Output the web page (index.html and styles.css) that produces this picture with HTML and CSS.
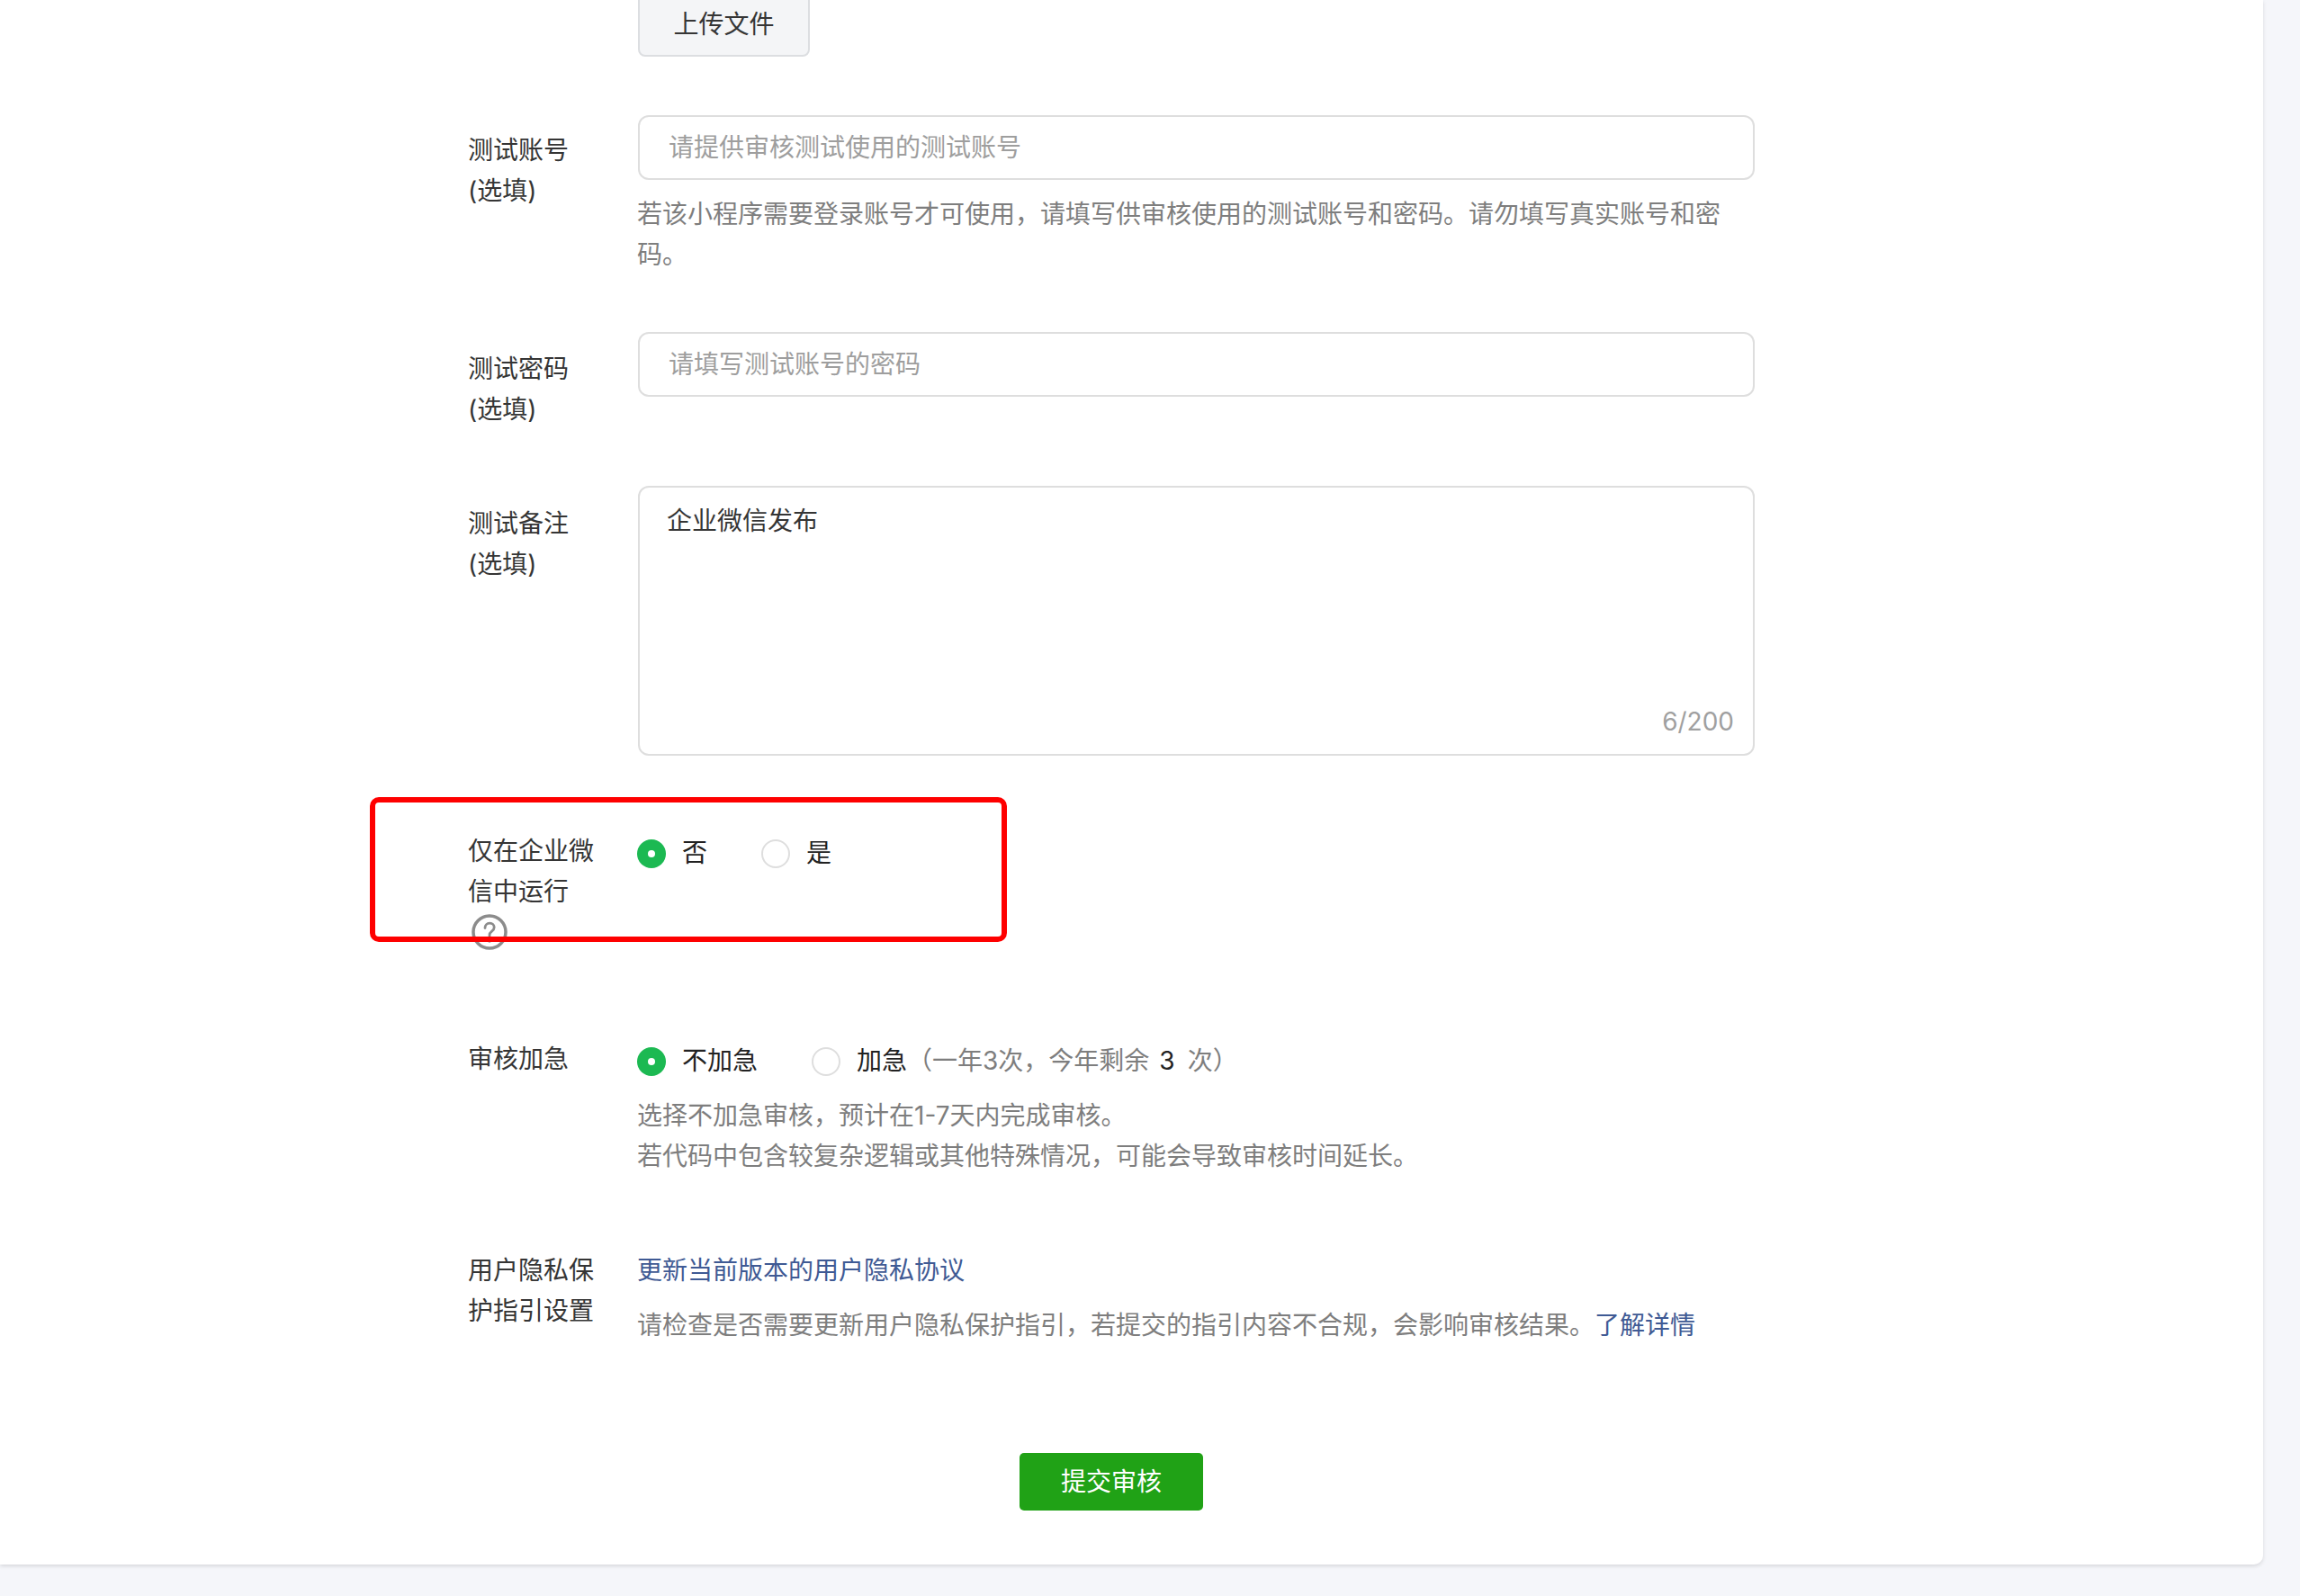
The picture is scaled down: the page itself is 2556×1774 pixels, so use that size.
FILE: index.html
```html
<!DOCTYPE html>
<html lang="zh-CN">
<head>
<meta charset="utf-8">
<title>提交审核</title>
<link rel="stylesheet" href="styles.css">
</head>
<body>
<main class="card">
  <section class="row row-upload">
    <div class="label"></div>
    <div class="field"><button class="upload" type="button">上传文件</button></div>
  </section>

  <section class="row row-account">
    <div class="label">测试账号<br>(选填)</div>
    <div class="field">
      <div class="text-input placeholder">请提供审核测试使用的测试账号</div>
      <p class="help">若该小程序需要登录账号才可使用，请填写供审核使用的测试账号和密码。请勿填写真实账号和密码。</p>
    </div>
  </section>

  <section class="row row-password">
    <div class="label">测试密码<br>(选填)</div>
    <div class="field"><div class="text-input placeholder">请填写测试账号的密码</div></div>
  </section>

  <section class="row row-notes">
    <div class="label">测试备注<br>(选填)</div>
    <div class="field">
      <div class="textarea">企业微信发布<span class="counter">6/200</span></div>
    </div>
  </section>

  <section class="row row-wecom">
    <div class="label">仅在企业微信中运行
      <svg class="question" viewBox="0 0 40 40" aria-hidden="true">
        <circle cx="20" cy="20" r="18" fill="none" stroke="#8c8c8c" stroke-width="3.500"/>
        <path d="M15 15.500c0-3.200 2.200-5.300 5.200-5.300 3 0 5 1.900 5 4.600 0 2.100-1.100 3.200-2.600 4.400-1.500 1.200-2.600 2.100-2.600 4v1.300" fill="none" stroke="#8c8c8c" stroke-width="2.800" stroke-linecap="round"/>
        <circle cx="20" cy="29.800" r="2" fill="#8c8c8c"/>
      </svg>
    </div>
    <div class="field">
      <div class="radios">
        <span class="radio radio-on"></span><span class="radio-text">否</span>
        <span class="radio"></span><span class="radio-text">是</span>
      </div>
    </div>
    <div class="highlight"></div>
  </section>

  <section class="row row-urgent">
    <div class="label">审核加急</div>
    <div class="field">
      <div class="radios">
        <span class="radio radio-on"></span><span class="radio-text">不加急</span>
        <span class="radio"></span><span class="radio-text">加急<span class="muted">（一年3次，今年剩余</span><span class="count">3</span><span class="muted">次）</span></span>
      </div>
      <p class="help">选择不加急审核，预计在1-7天内完成审核。<br>若代码中包含较复杂逻辑或其他特殊情况，可能会导致审核时间延长。</p>
    </div>
  </section>

  <section class="row row-privacy">
    <div class="label">用户隐私保护指引设置</div>
    <div class="field">
      <a class="link link-main" href="#">更新当前版本的用户隐私协议</a>
      <p class="help">请检查是否需要更新用户隐私保护指引，若提交的指引内容不合规，会影响审核结果。<a class="link" href="#">了解详情</a></p>
    </div>
  </section>

  <div class="actions"><button class="submit" type="button">提交审核</button></div>
</main>
</body>
</html>
```
FILE: styles.css
```css
* { box-sizing: border-box; }

html, body {
  margin: 0;
  height: 1774px;
  overflow: hidden;
}

body {
  background: #f5f6fa;
  color: #353535;
  font-family: Inter, "Noto Sans CJK SC", "Liberation Sans", sans-serif;
  font-size: 28px;
  line-height: 45px;
}

.card {
  width: 2515px;
  height: 1739px;
  background: #fff;
  border-bottom-right-radius: 10px;
  box-shadow: 0 2px 4px rgba(0, 0, 0, 0.12);
  overflow: hidden;
}

.row {
  position: relative;
  display: grid;
  grid-template-columns: 189px 1241px;
  padding-left: 520px;
}

.label {
  width: 150px;
  padding-top: 19px;
}

.field { min-width: 0; }

.row-upload {
  grid-template-rows: 63px;
  height: 63px;
  align-items: end;
}
.row-upload .label { padding: 0; }

.row-account { margin-top: 65px; }
.row-password { margin-top: 63px; }
.row-notes { margin-top: 62px; }
.row-wecom { margin-top: 66px; }
.row-urgent { margin-top: 81px; }
.row-privacy { margin-top: 82px; }

.row-account .label { padding-top: 17px; }
.row-notes .label { padding-top: 20px; }
.row-wecom .label,
.row-urgent .label { padding-top: 18px; }
.row-privacy .label { padding-top: 0; }

.upload {
  display: block;
  width: 191px;
  height: 72px;
  padding: 0;
  background: #f4f5f7;
  border: 2px solid #dcdee1;
  border-radius: 8px;
  color: #353535;
  font: inherit;
}

.text-input {
  height: 72px;
  padding: 12px 32px;
  border: 2px solid #dedede;
  border-radius: 12px;
}

.placeholder { color: #9e9e9e; }

.help {
  margin: 0 0 0 -1px;
  padding-top: 16px;
  color: #7e7e7e;
}

.textarea {
  position: relative;
  height: 300px;
  padding: 15px 30px;
  border: 2px solid #dedede;
  border-radius: 12px;
}

.counter {
  position: absolute;
  right: 21px;
  bottom: 13px;
  color: #a0a0a0;
}

.radios {
  display: flex;
  align-items: center;
  height: 45px;
  margin: 20px 0 0 -1px;
}

.radio {
  flex: none;
  width: 32px;
  height: 32px;
  margin-right: 18px;
  border: 2px solid #dedede;
  border-radius: 50%;
  background: #fff;
}

.radio-on {
  position: relative;
  border: 0;
  background: #1cb952;
}

.radio-on::after {
  content: "";
  position: absolute;
  top: 12px;
  left: 12px;
  width: 8px;
  height: 8px;
  border-radius: 50%;
  background: #fff;
}

.radio-text {
  margin-right: 60px;
  color: #222;
}

.muted { color: #7e7e7e; }

.count { margin: 0 14px 0 11px; }

.question {
  display: block;
  width: 40px;
  height: 40px;
  margin: 2px 0 0 4px;
}

.highlight {
  position: absolute;
  top: -20px;
  left: 411px;
  width: 708px;
  height: 161px;
  border: 6px solid #fe0000;
  border-radius: 10px;
}

.link {
  color: #3f5a94;
  text-decoration: none;
}

.link-main { margin-left: -1px; }

.actions {
  display: flex;
  justify-content: center;
  width: 2470px;
  margin-top: 119px;
}

.submit {
  width: 204px;
  height: 64px;
  padding: 0;
  background: #20a216;
  border: 0;
  border-radius: 5px;
  color: #fff;
  font: inherit;
}
```
